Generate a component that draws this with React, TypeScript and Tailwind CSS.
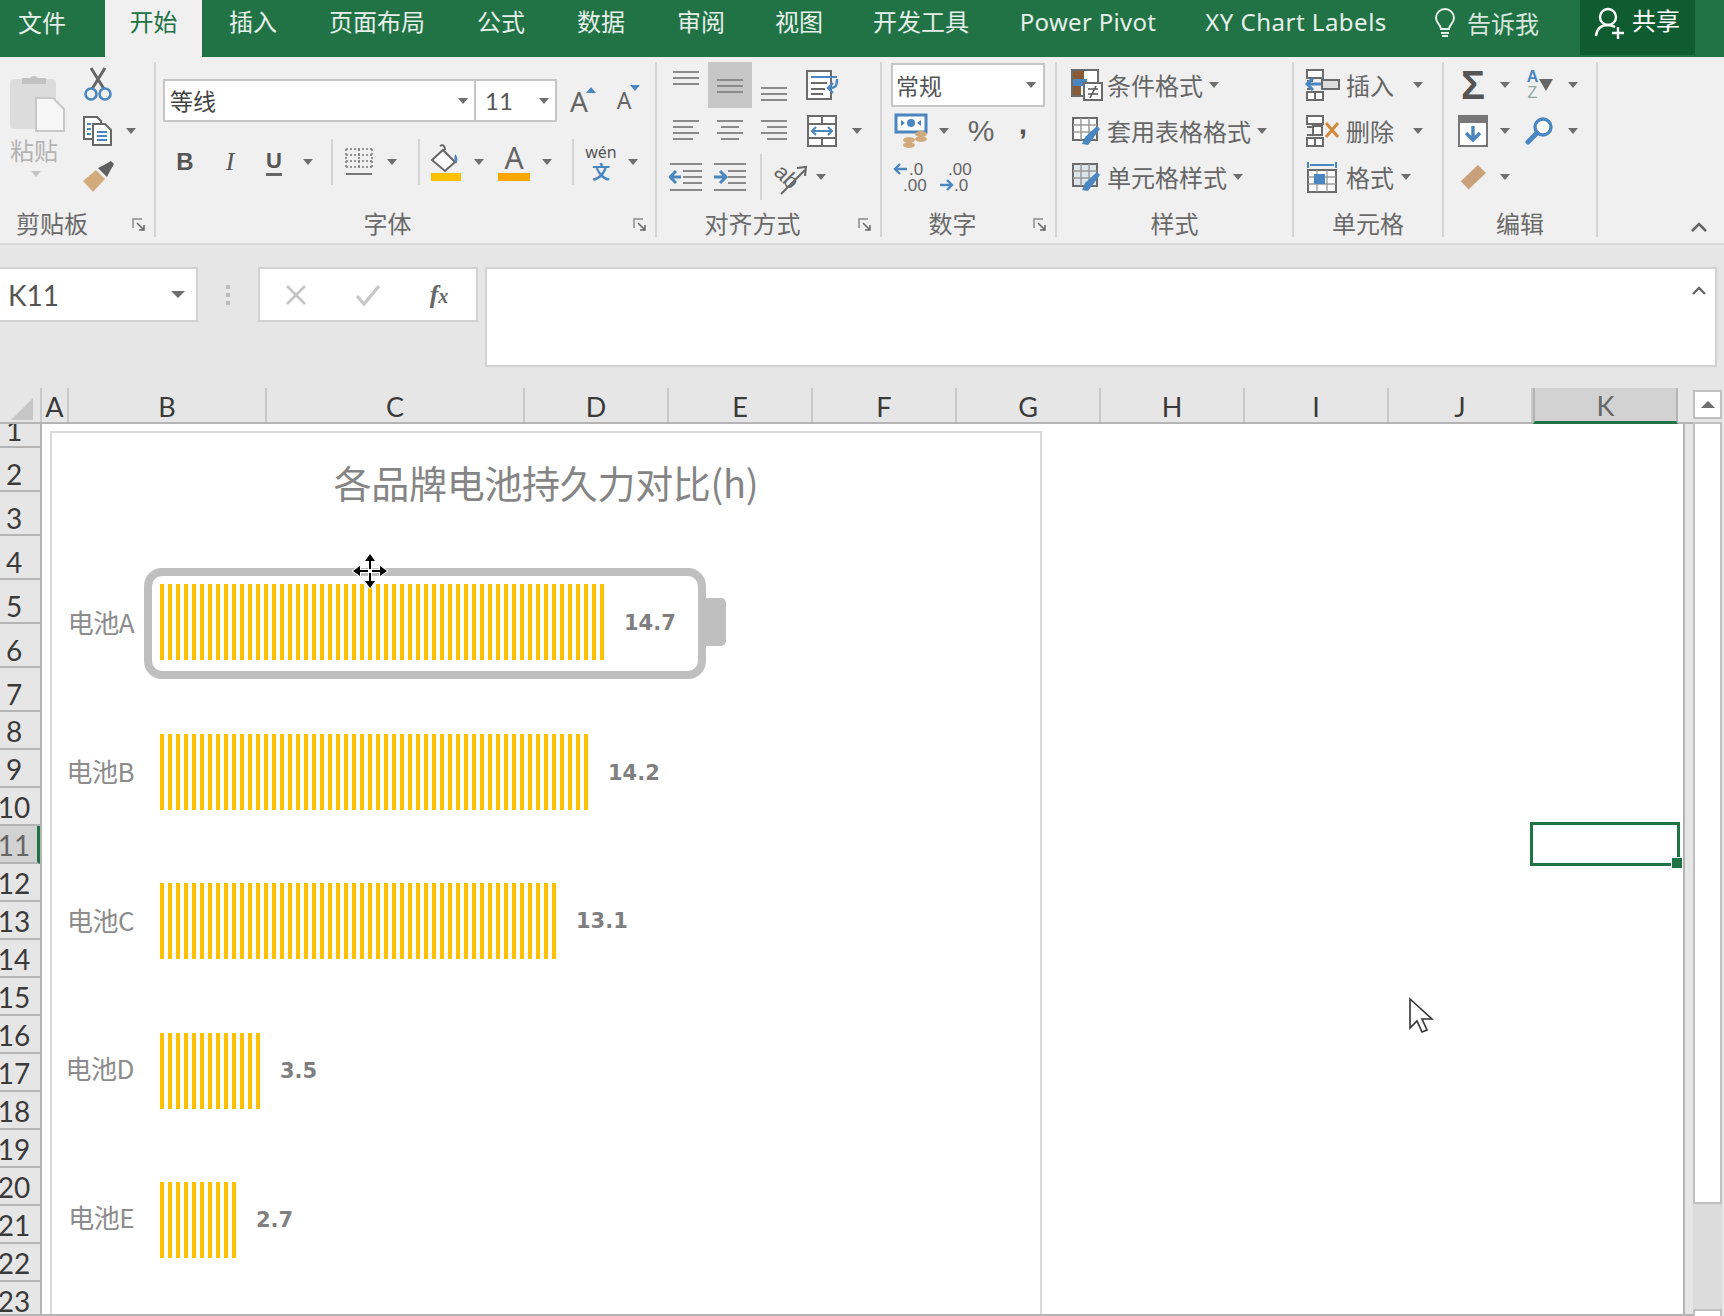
import type { ReactNode } from "react";

const blue = "#4a86bf";
const gray = "#6b6b6b";
const tan = "#d2ab7c";

const tabs = [
  { label: "插入", w: "w-[102px]" },
  { label: "页面布局", w: "w-[146px]" },
  { label: "公式", w: "w-[102px]" },
  { label: "数据", w: "w-[98px]" },
  { label: "审阅", w: "w-[102px]" },
  { label: "视图", w: "w-[94px]" },
  { label: "开发工具", w: "w-[150px]" },
  { label: "Power Pivot", w: "w-[184px] tracking-[0.3px]" },
  { label: "XY Chart Labels", w: "w-[232px] tracking-[0.5px]" },
];

const columns = [
  { label: "A", w: "w-[27px]" },
  { label: "B", w: "w-[198px]" },
  { label: "C", w: "w-[258px]" },
  { label: "D", w: "w-[144px]" },
  { label: "E", w: "w-[144px]" },
  { label: "F", w: "w-[144px]" },
  { label: "G", w: "w-[144px]" },
  { label: "H", w: "w-[144px]" },
  { label: "I", w: "w-[144px]" },
  { label: "J", w: "w-[144px]" },
];

const rowNumbers = Array.from({ length: 23 }, (_, i) => i + 1);

const batteries = [
  { name: "电池A", value: "14.7", w: "w-[444px]", lift: "-mt-[1px]", drop: "mt-[4px]" },
  { name: "电池B", value: "14.2", w: "w-[428px]", lift: "-mt-[3px]", drop: "mt-[4px]" },
  { name: "电池C", value: "13.1", w: "w-[396px]", lift: "-mt-[3px]", drop: "mt-[2px]" },
  { name: "电池D", value: "3.5", w: "w-[100px]", lift: "-mt-[7px]", drop: "mt-[2px]" },
  { name: "电池E", value: "2.7", w: "w-[76px]", lift: "-mt-[7px]", drop: "mt-[1px]" },
];

function Caret({ faded }: { faded?: boolean }) {
  return (
    <span
      className={
        "inline-block h-0 w-0 border-x-[5px] border-t-[6px] border-x-transparent " +
        (faded ? "border-t-[#c4c4c4]" : "border-t-[#6e6e6e]")
      }
    />
  );
}

function S({ c, children }: { c: string; children?: ReactNode }) {
  return <div className={"flex h-full items-center justify-center " + c}>{children}</div>;
}

function Sep() {
  return <span className="block h-[46px] w-[2px] bg-[#d4d4d4]" />;
}

function Launcher() {
  return (
    <svg width="14" height="14" viewBox="0 0 14 14" className="absolute right-[8px] top-[8px]">
      <path d="M1 10V1h9" fill="none" stroke="#8a8a8a" strokeWidth="1.5" />
      <path d="M5 5l7 7M12 7v5H7" fill="none" stroke="#666" strokeWidth="1.5" />
    </svg>
  );
}

function Group({
  label,
  launcher,
  c,
  labelPad,
  children,
}: {
  label: string;
  launcher?: boolean;
  c: string;
  labelPad?: string;
  children: ReactNode;
}) {
  return (
    <div className={"mt-[5px] flex h-[175px] shrink-0 flex-col border-r-2 border-[#d4d4d4] " + c}>
      <div className="h-[148px]">{children}</div>
      <div className={"relative h-[26px] text-center text-[24px] leading-[26px] text-[#6a6a6a] " + (labelPad ?? "")}>
        {label}
        {launcher && <Launcher />}
      </div>
    </div>
  );
}

function Lines({ kind }: { kind: "top" | "mid" | "bottom" | "left" | "center" | "right" }) {
  if (kind === "top" || kind === "mid" || kind === "bottom") {
    const y = kind === "top" ? 4 : kind === "mid" ? 12 : 20;
    return (
      <svg width="30" height="34" viewBox="0 0 30 34">
        <path d={`M2 ${y}h26M2 ${y + 6}h26M2 ${y + 12}h26`} stroke="#8a8a8a" strokeWidth="2" />
      </svg>
    );
  }
  const short = kind === "left" ? "M2 13h20M2 25h20" : kind === "center" ? "M6 13h18M6 25h18" : "M8 13h20M8 25h20";
  return (
    <svg width="30" height="34" viewBox="0 0 30 34">
      <path d="M2 7h26M2 19h26" stroke="#8a8a8a" strokeWidth="2" />
      <path d={short} stroke="#8a8a8a" strokeWidth="2" />
    </svg>
  );
}

function Grid({ fill }: { fill?: string }) {
  return (
    <svg width="34" height="32" viewBox="0 0 34 32">
      <rect x="3" y="3" width="24" height="22" fill={fill ?? "#fff"} stroke={gray} strokeWidth="2" />
      <path d="M3 10h24M3 17h24M11 3v22M19 3v22" stroke="#9a9a9a" strokeWidth="1.5" />
      <path d="M30 14l-12 16 -6-1 3-7 12-11z" fill={blue} />
    </svg>
  );
}

function CellIcon({ kind }: { kind: "insert" | "delete" | "format" }) {
  if (kind === "format") {
    return (
      <svg width="34" height="36" viewBox="0 0 34 36">
        <path d="M2 3v6M30 3v6M4 6h24" stroke={blue} strokeWidth="2" />
        <rect x="2" y="11" width="28" height="22" fill="#fff" stroke={gray} strokeWidth="2" />
        <path d="M2 18h28M2 25h28M11 11v22M21 11v22" stroke="#9a9a9a" strokeWidth="1.3" />
        <rect x="8" y="15" width="11" height="10" fill={blue} />
      </svg>
    );
  }
  return (
    <svg width="36" height="34" viewBox="0 0 36 34">
      <path d="M2 2h16v8H2zM2 24h16v8H2zM10 24v8M2 13h6M2 21h6" fill="#fff" stroke={gray} strokeWidth="2" />
      {kind === "insert" ? (
        <>
          <rect x="17" y="12" width="17" height="9" fill="#ddd" stroke={gray} strokeWidth="2" />
          <path d="M16 16H3M8 10l-6 6 6 6" fill="none" stroke={blue} strokeWidth="3" />
        </>
      ) : (
        <>
          <rect x="8" y="12" width="9" height="9" fill="#fff" stroke={gray} strokeWidth="2" />
          <path d="M21 9l12 14M33 9L21 23" stroke="#d08a3c" strokeWidth="3" />
        </>
      )}
    </svg>
  );
}

function StyleRow({ icon, label }: { icon: ReactNode; label: string }) {
  return (
    <div className="flex h-[46px] items-center pl-[10px]">
      <S c="w-[40px]">{icon}</S>
      <span className="text-[24px] text-[#666]">{label}</span>
      <span className="ml-[6px] flex">
        <Caret />
      </span>
    </div>
  );
}

function Ribbon() {
  return (
    <div className="flex h-[188px] border-b-2 border-[#d9d9d9] bg-[#f0f0f0]">
      {/* 剪贴板 */}
      <Group label="剪贴板" launcher c="w-[156px]" labelPad="pr-[50px]">
        <div className="flex h-full">
          <div className="flex w-[76px] flex-col items-center pl-[2px] pt-[9px]">
            <svg width="60" height="62" viewBox="0 0 60 62">
              <rect x="1" y="8" width="46" height="50" rx="4" fill="#dcdcdc" />
              <path d="M13 13V7h8a5 5 0 0 1 8 0h8v6z" fill="#c2c2c2" />
              <path d="M27 27h17l11 11v22H27z" fill="#f6f6f6" stroke="#c8c8c8" strokeWidth="2" />
            </svg>
            <span className="mr-[10px] mt-[2px] text-[24px] leading-[30px] text-[#b4b4b4]">粘贴</span>
            <span className="mr-[6px] mt-[6px] flex">
              <Caret faded />
            </span>
          </div>
          <div>
            <div className="flex h-[46px] items-center">
              <S c="w-[44px]">
                <svg width="30" height="36" viewBox="0 0 30 36">
                  <path d="M9 22L22 1M21 22L8 1" stroke="#666" strokeWidth="3" />
                  <circle cx="8" cy="27" r="5.5" fill="none" stroke={blue} strokeWidth="2.6" />
                  <circle cx="22" cy="27" r="5.5" fill="none" stroke={blue} strokeWidth="2.6" />
                </svg>
              </S>
            </div>
            <div className="flex h-[46px] items-center">
              <S c="w-[44px]">
                <svg width="32" height="32" viewBox="0 0 32 32">
                  <path d="M2 2h13l4 4v18H2z" fill="#fff" stroke="#666" strokeWidth="2" />
                  <path d="M11 9h12l6 6v15H11z" fill="#fff" stroke="#666" strokeWidth="2" />
                  <path d="M5 9h4M5 14h4M5 19h4M15 17h10M15 21h10M15 25h10" stroke={blue} strokeWidth="2" />
                </svg>
              </S>
              <S c="w-[22px]">
                <Caret />
              </S>
            </div>
            <div className="flex h-[46px] items-center">
              <S c="w-[44px]">
                <svg width="34" height="32" viewBox="0 0 34 32">
                  <path d="M2 20L15 9l9 9-12 13z" fill={tan} />
                  <path d="M17 7l6-3 7-4 3 3-4 7-3 6z" fill="#5f5f5f" />
                </svg>
              </S>
            </div>
          </div>
        </div>
      </Group>

      {/* 字体 */}
      <Group label="字体" launcher c="w-[501px]" labelPad="pr-[36px]">
        <div className="pl-[7px] pt-[17px]">
          <div className="flex h-[43px] items-center">
            <div className="flex h-full w-[313px] items-center justify-between border-2 border-[#c6c6c6] bg-white pl-[5px] pr-[6px] text-[23px] text-[#444]">
              等线
              <Caret />
            </div>
            <div className="flex h-full w-[81px] items-center justify-between border-2 border-l-0 border-[#c6c6c6] bg-white pl-[9px] pr-[6px] font-['Lato'] text-[24px] text-[#555]">
              11
              <Caret />
            </div>
            <S c="w-[44px]">
              <span className="relative font-['Noto_Sans'] text-[28px] leading-none text-[#666]">
                A
                <span className="absolute -right-[8px] top-[0px] h-0 w-0 border-x-[5px] border-b-[6px] border-x-transparent border-b-[#4a86bf]" />
              </span>
            </S>
            <S c="w-[46px]">
              <span className="relative font-['Noto_Sans'] text-[23px] leading-none text-[#666]">
                A
                <span className="absolute -right-[9px] -top-[4px] h-0 w-0 border-x-[5px] border-t-[6px] border-x-transparent border-t-[#4a86bf]" />
              </span>
            </S>
          </div>
          <div className="mt-[17px] flex h-[46px] items-center text-[#555]">
            <S c="w-[44px]">
              <span className="font-['Liberation_Sans'] text-[24px] font-bold leading-none">B</span>
            </S>
            <S c="w-[46px]">
              <span className="font-['Liberation_Serif'] text-[26px] italic leading-none">I</span>
            </S>
            <S c="w-[42px]">
              <span className="border-b-[3px] border-[#666] font-['Liberation_Sans'] text-[22px] font-bold leading-[24px]">U</span>
            </S>
            <S c="w-[26px]">
              <Caret />
            </S>
            <S c="w-[22px]">
              <Sep />
            </S>
            <S c="w-[32px]">
              <svg width="30" height="30" viewBox="0 0 30 30">
                <path d="M2 2h26M2 8h26M2 14h26M2 20h26M2 2v20M15 2v20M28 2v20" stroke="#777" strokeWidth="1.5" strokeDasharray="2 2" fill="none" />
                <path d="M2 27h26" stroke="#777" strokeWidth="2" />
              </svg>
            </S>
            <S c="w-[34px]">
              <Caret />
            </S>
            <S c="w-[20px]">
              <Sep />
            </S>
            <S c="w-[34px]">
              <svg width="34" height="38" viewBox="0 0 34 38">
                <path d="M11 3c3-2 5 0 5 4M3 17l11-10 12 12-10 9z" fill="#fff" stroke="#666" strokeWidth="2" />
                <path d="M26 11c3 3 3 7 1 10-2-3-2-7-1-10z" fill={blue} />
                <rect x="2" y="30" width="30" height="8" fill="#ffc000" />
              </svg>
            </S>
            <S c="w-[32px]">
              <Caret />
            </S>
            <S c="w-[38px]">
              <div className="flex w-[32px] flex-col items-center">
                <span className="font-['Noto_Sans'] text-[30px] leading-[30px] text-[#666]">A</span>
                <span className="block h-[8px] w-full bg-[#ffa500]" />
              </div>
            </S>
            <S c="w-[28px]">
              <Caret />
            </S>
            <S c="w-[24px]">
              <Sep />
            </S>
            <S c="w-[32px]">
              <div className="flex flex-col items-center">
                <span className="font-['Noto_Sans'] text-[16px] leading-[18px] text-[#555]">wén</span>
                <span className="text-[18px] font-bold leading-[20px] text-[#4a86bf]">文</span>
              </div>
            </S>
            <S c="w-[32px]">
              <Caret />
            </S>
          </div>
        </div>
      </Group>

      {/* 对齐方式 */}
      <Group label="对齐方式" launcher c="w-[225px]" labelPad="pr-[32px]">
        <div className="pl-[7px]">
          <div className="flex h-[46px] items-center">
            <S c="w-[44px]">
              <Lines kind="top" />
            </S>
            <S c="h-[44px] w-[44px] bg-[#c6c6c6]">
              <Lines kind="mid" />
            </S>
            <S c="w-[44px]">
              <Lines kind="bottom" />
            </S>
            <S c="w-[52px]">
              <svg width="34" height="32" viewBox="0 0 34 32">
                <rect x="2" y="2" width="24" height="28" fill="#fff" stroke={gray} strokeWidth="2" />
                <path d="M6 8h26" stroke={blue} strokeWidth="2" />
                <path d="M6 14h16M6 20h14M6 25h12" stroke={gray} strokeWidth="2" />
                <path d="M32 10c0 8-2 9-8 9M28 14l-5 5 5 5" fill="none" stroke={blue} strokeWidth="2.4" />
              </svg>
            </S>
          </div>
          <div className="flex h-[46px] items-center">
            <S c="w-[44px]">
              <Lines kind="left" />
            </S>
            <S c="w-[44px]">
              <Lines kind="center" />
            </S>
            <S c="w-[44px]">
              <Lines kind="right" />
            </S>
            <S c="w-[52px]">
              <svg width="32" height="34" viewBox="0 0 32 34">
                <rect x="2" y="2" width="28" height="30" fill="#fff" stroke={gray} strokeWidth="2" />
                <path d="M2 10h28M2 24h28M16 2v8M16 24v8" stroke={gray} strokeWidth="2" />
                <path d="M6 17h20M10 13l-4 4 4 4M22 13l4 4-4 4" fill="none" stroke={blue} strokeWidth="2" />
              </svg>
            </S>
            <S c="w-[18px]">
              <Caret />
            </S>
          </div>
          <div className="flex h-[46px] items-center">
            <S c="w-[44px]">
              <svg width="34" height="32" viewBox="0 0 34 32">
                <path d="M1 3h32M14 10h19M14 16h19M14 22h19M1 29h32" stroke="#8a8a8a" strokeWidth="2" />
                <path d="M12 16H2M7 10l-6 6 6 6" fill="none" stroke={blue} strokeWidth="3" />
              </svg>
            </S>
            <S c="w-[44px]">
              <svg width="34" height="32" viewBox="0 0 34 32">
                <path d="M1 3h32M15 10h18M15 16h18M15 22h18M1 29h32" stroke="#8a8a8a" strokeWidth="2" />
                <path d="M1 16h11M7 10l6 6-6 6" fill="none" stroke={blue} strokeWidth="3" />
              </svg>
            </S>
            <S c="w-[18px]">
              <Sep />
            </S>
            <S c="w-[44px]">
              <svg width="38" height="38" viewBox="0 0 38 38">
                <text x="2" y="26" transform="rotate(45 14 18)" fontFamily="Liberation Sans" fontSize="22" fill="#666">
                  ab
                </text>
                <path d="M8 36L32 12M24 10l9-1-1 9" fill="none" stroke="#666" strokeWidth="2" />
              </svg>
            </S>
            <S c="w-[14px]">
              <Caret />
            </S>
          </div>
        </div>
      </Group>

      {/* 数字 */}
      <Group label="数字" launcher c="w-[175px]" labelPad="pr-[32px]">
        <div className="pl-[9px]">
          <div className="flex h-[46px] items-center">
            <div className="flex h-[44px] w-[154px] items-center justify-between border-2 border-[#c6c6c6] bg-white pl-[3px] pr-[7px] text-[23px] text-[#555]">
              常规
              <Caret />
            </div>
          </div>
          <div className="flex h-[46px] items-center">
            <S c="w-[42px]">
              <svg width="36" height="36" viewBox="0 0 36 36">
                <rect x="2" y="2" width="30" height="17" fill="#fff" stroke={blue} strokeWidth="3" />
                <path d="M7 7l4 3-4 3zM27 7l-4 3 4 3z" fill={blue} />
                <circle cx="17" cy="10" r="4" fill={blue} />
                <ellipse cx="27" cy="21" rx="6" ry="3" fill={tan} />
                <ellipse cx="27" cy="26" rx="6" ry="3" fill={tan} />
                <ellipse cx="15" cy="27" rx="6" ry="3" fill={tan} />
                <ellipse cx="15" cy="32" rx="6" ry="3" fill={tan} />
              </svg>
            </S>
            <S c="w-[22px]">
              <Caret />
            </S>
            <S c="w-[52px]">
              <span className="font-['Liberation_Sans'] text-[30px] leading-none text-[#666]">%</span>
            </S>
            <S c="w-[32px]">
              <span className="mb-[14px] font-['Liberation_Sans'] text-[30px] font-bold leading-none text-[#555]">,</span>
            </S>
          </div>
          <div className="flex h-[46px] items-center">
            <S c="w-[40px]">
              <svg width="36" height="34" viewBox="0 0 36 34">
                <path d="M2 9h12M7 4L2 9l5 5" fill="none" stroke={blue} strokeWidth="2.4" />
                <text x="16" y="15" fontFamily="Liberation Sans" fontSize="17" fill="#666">.0</text>
                <text x="10" y="31" fontFamily="Liberation Sans" fontSize="17" fill="#666">.00</text>
              </svg>
            </S>
            <S c="w-[50px]">
              <svg width="36" height="34" viewBox="0 0 36 34">
                <text x="10" y="15" fontFamily="Liberation Sans" fontSize="17" fill="#666">.00</text>
                <path d="M2 25h12M9 20l5 5-5 5" fill="none" stroke={blue} strokeWidth="2.4" />
                <text x="16" y="31" fontFamily="Liberation Sans" fontSize="17" fill="#666">.0</text>
              </svg>
            </S>
          </div>
        </div>
      </Group>

      {/* 样式 */}
      <Group label="样式" c="w-[237px]">
        <StyleRow
          label="条件格式"
          icon={
            <svg width="34" height="34" viewBox="0 0 34 34">
              <rect x="2" y="2" width="26" height="26" fill="#fff" stroke={gray} strokeWidth="2" />
              <rect x="3" y="3" width="11" height="8" fill="#8a5a34" />
              <rect x="3" y="11" width="14" height="7" fill={blue} />
              <rect x="3" y="18" width="8" height="9" fill="#8a5a34" />
              <rect x="14" y="15" width="18" height="17" fill="#fff" stroke={gray} strokeWidth="2" />
              <path d="M18 21h10M18 26h10M26 18l-6 12" stroke="#555" strokeWidth="1.5" />
            </svg>
          }
        />
        <StyleRow label="套用表格格式" icon={<Grid />} />
        <StyleRow label="单元格样式" icon={<Grid fill="#dbe5ea" />} />
      </Group>

      {/* 单元格 */}
      <Group label="单元格" c="w-[150px]">
        <div className="flex h-[46px] items-center pl-[11px]">
          <S c="w-[36px]">
            <CellIcon kind="insert" />
          </S>
          <span className="ml-[5px] text-[24px] text-[#666]">插入</span>
          <span className="ml-[19px] flex">
            <Caret />
          </span>
        </div>
        <div className="flex h-[46px] items-center pl-[11px]">
          <S c="w-[36px]">
            <CellIcon kind="delete" />
          </S>
          <span className="ml-[5px] text-[24px] text-[#666]">删除</span>
          <span className="ml-[19px] flex">
            <Caret />
          </span>
        </div>
        <div className="flex h-[46px] items-center pl-[11px]">
          <S c="w-[36px]">
            <CellIcon kind="format" />
          </S>
          <span className="ml-[5px] text-[24px] text-[#666]">格式</span>
          <span className="ml-[7px] flex">
            <Caret />
          </span>
        </div>
      </Group>

      {/* 编辑 */}
      <Group label="编辑" c="w-[154px]">
        <div className="flex h-[46px] items-center pl-[11px]">
          <S c="w-[36px]">
            <span className="font-['Liberation_Sans'] text-[40px] font-bold leading-none text-[#555]">Σ</span>
          </S>
          <S c="w-[28px]">
            <Caret />
          </S>
          <S c="w-[42px]">
            <div className="flex items-center">
              <div className="flex flex-col items-center font-['Liberation_Sans'] text-[16px] font-bold leading-[16px]">
                <span className="text-[#4a86bf]">A</span>
                <span className="font-normal text-[#8fa8a0]">Z</span>
              </div>
              <span className="ml-[1px] h-0 w-0 border-x-[7px] border-t-[12px] border-x-transparent border-t-[#666]" />
            </div>
          </S>
          <S c="w-[24px]">
            <Caret />
          </S>
        </div>
        <div className="flex h-[46px] items-center pl-[11px]">
          <S c="w-[36px]">
            <svg width="30" height="32" viewBox="0 0 30 32">
              <rect x="1" y="1" width="28" height="30" fill="#fff" stroke="#777" strokeWidth="2" />
              <rect x="1" y="1" width="28" height="7" fill="#777" />
              <path d="M15 11v14M8 18l7 7 7-7" fill="none" stroke={blue} strokeWidth="3.4" />
            </svg>
          </S>
          <S c="w-[28px]">
            <Caret />
          </S>
          <S c="w-[42px]">
            <svg width="30" height="30" viewBox="0 0 30 30">
              <circle cx="18" cy="11" r="8" fill="#fff" stroke={blue} strokeWidth="3.4" />
              <path d="M12 17L3 26" stroke={blue} strokeWidth="5" strokeLinecap="round" />
            </svg>
          </S>
          <S c="w-[24px]">
            <Caret />
          </S>
        </div>
        <div className="flex h-[46px] items-center pl-[11px]">
          <S c="w-[36px]">
            <svg width="28" height="28" viewBox="0 0 28 28">
              <path d="M1 19L19 2l8 8L9 27z" fill="#c8a07a" />
              <path d="M1 19l8 8" stroke="#f0f0f0" strokeWidth="2" />
            </svg>
          </S>
          <S c="w-[28px]">
            <Caret />
          </S>
        </div>
      </Group>

      <div className="flex flex-1 items-end justify-end pb-[10px] pr-[16px]">
        <svg width="18" height="12" viewBox="0 0 18 12">
          <path d="M2 10l7-7 7 7" fill="none" stroke="#666" strokeWidth="2.6" />
        </svg>
      </div>
    </div>
  );
}

function FormulaBar() {
  return (
    <div className="flex h-[143px] pt-[22px]">
      <div className="flex h-[55px] w-[198px] items-center justify-between border-2 border-l-0 border-[#d2d2d2] bg-white pl-[8px] pr-[11px] font-['Lato'] text-[28px] text-[#555]">
        K11
        <span className="h-0 w-0 border-x-[7px] border-t-[7px] border-x-transparent border-t-[#6e6e6e]" />
      </div>
      <div className="flex h-[55px] w-[60px] flex-col items-center justify-center gap-[4px]">
        <span className="h-[4px] w-[4px] bg-[#bcbcbc]" />
        <span className="h-[4px] w-[4px] bg-[#bcbcbc]" />
        <span className="h-[4px] w-[4px] bg-[#bcbcbc]" />
      </div>
      <div className="flex h-[55px] w-[220px] items-center border-2 border-[#d2d2d2] bg-white">
        <S c="w-[72px]">
          <svg width="22" height="22" viewBox="0 0 22 22">
            <path d="M2 2l18 18M20 2L2 20" stroke="#c4c4c4" strokeWidth="2.6" />
          </svg>
        </S>
        <S c="w-[72px]">
          <svg width="26" height="22" viewBox="0 0 26 22">
            <path d="M2 12l7 8L24 2" fill="none" stroke="#c8c8c8" strokeWidth="3.4" />
          </svg>
        </S>
        <S c="w-[70px]">
          <span className="font-['Liberation_Serif'] text-[26px] font-bold italic leading-none text-[#666]">
            f<span className="text-[20px]">x</span>
          </span>
        </S>
      </div>
      <div className="ml-[7px] flex h-[100px] w-[1232px] justify-end border-2 border-[#d2d2d2] bg-white pr-[8px] pt-[16px]">
        <svg width="16" height="12" viewBox="0 0 16 12">
          <path d="M2 9l6-6 6 6" fill="none" stroke="#666" strokeWidth="2.4" />
        </svg>
      </div>
    </div>
  );
}

function Chart() {
  return (
    <div className="ml-[8px] mt-[7px] h-[900px] w-[992px] border-2 border-[#d9d9d9] bg-white">
      <div className="flex h-[96px] items-center justify-center text-[38px] tracking-[-0.3px] text-[#858585]">
        各品牌电池持久力对比(h)
      </div>
      <div className="flex flex-col gap-[73.5px] pt-[55px]">
        {batteries.map((b, i) => (
          <div key={b.name} className="relative flex h-[76px] items-center">
            <div className={"w-[82px] text-right text-[26px] tracking-[-0.5px] text-[#8c8c8c] " + b.lift}>{b.name}</div>
            <div
              className={
                "ml-[26px] h-full bg-[repeating-linear-gradient(90deg,#ffc000_0,#ffc000_4px,#fff_4px,#fff_8px)] " + b.w
              }
            />
            <div className={"ml-[20px] font-['DejaVu_Sans'] text-[21px] font-bold text-[#7f7f7f] " + b.drop}>{b.value}</div>
            {i === 0 && (
              <div className="absolute left-[92px] top-[-16px] h-[111px] w-[562px] rounded-[18px] border-[8px] border-[#bfbfbf]">
                <div className="absolute -right-[28px] top-[22px] h-[48px] w-[20px] rounded-r-[5px] bg-[#bfbfbf]" />
              </div>
            )}
          </div>
        ))}
      </div>
    </div>
  );
}

function Sheet() {
  return (
    <div className="flex w-[1693px] shrink-0 flex-col border-b-2 border-[#b4b4b4]">
      <div className="flex h-[36px] shrink-0 border-b-2 border-[#b4b4b4] font-['Lato'] text-[27px] leading-none text-[#3a3a3a]">
        <div className="flex w-[42px] items-end justify-end border-r-2 border-[#c8c8c8] pb-[2px] pr-[7px]">
          <span className="h-0 w-0 border-b-[22px] border-l-[22px] border-b-[#c6c6c6] border-l-transparent" />
        </div>
        {columns.map((c) => (
          <div key={c.label} className={"flex items-center justify-center border-r-2 border-[#c8c8c8] pt-[2px] " + c.w}>
            {c.label}
          </div>
        ))}
        <div className="-mb-[2px] flex w-[145px] items-center justify-center border-x-2 border-b-[3px] border-x-[#b4b4b4] border-b-[#217346] bg-[#d2d2d2] pt-[2px] text-[#666]">
          K
        </div>
      </div>
      <div className="flex min-h-0 flex-1">
        <div className="w-[42px] shrink-0 overflow-hidden border-r-2 border-[#b4b4b4] font-['Lato'] text-[28px] leading-none text-[#3a3a3a]">
          {rowNumbers.map((n) => (
            <div
              key={n}
              className={
                "flex items-center overflow-hidden border-b-2 border-[#b4b4b4] " +
                (n === 1 ? "h-[24px]" : n < 8 ? "h-[44px]" : "h-[38px]") +
                (n === 11 ? " border-r-[3px] border-r-[#217346] bg-[#d2d2d2] text-[#666]" : "")
              }
            >
              <span
                className={
                  "flex w-[28px] justify-center " +
                  (n === 1 ? "-mt-[10px]" : n < 8 ? "mt-[9px]" : "mt-[2px]")
                }
              >
                {n}
              </span>
            </div>
          ))}
        </div>
        <div className="relative w-[1643px] overflow-hidden border-r-2 border-[#b4b4b4] bg-white">
          <Chart />
          {/* selected cell */}
          <div className="absolute left-[1488px] top-[398px] h-[44px] w-[150px] border-[3px] border-[#217346]">
            <div className="absolute -bottom-[6px] -right-[6px] h-[12px] w-[12px] border border-white bg-[#217346]" />
          </div>
          {/* pointers */}
          <svg width="36" height="36" viewBox="0 0 36 36" className="absolute left-[310px] top-[129px]">
            <g fill="#000" stroke="#fff" strokeWidth="2" paintOrder="stroke">
              <path d="M18 6v24M6 18h24" stroke="#fff" strokeWidth="4" />
              <path d="M18 1l5 7h-10zM18 35l5-7h-10zM1 18l7-5v10zM35 18l-7-5v10z" />
            </g>
            <path d="M18 6v24M6 18h24" stroke="#000" strokeWidth="2" />
            <rect x="16" y="16" width="4" height="4" fill="#fff" />
          </svg>
          <svg width="28" height="38" viewBox="0 0 28 38" className="absolute left-[1366px] top-[573px]">
            <path d="M2 2v29l7-7 5 11 5-2-5-11h10z" fill="#fff" stroke="#333" strokeWidth="1.6" />
          </svg>
        </div>
      </div>
    </div>
  );
}

export default function App() {
  return (
    <div className="flex h-[1316px] w-[1724px] flex-col overflow-hidden bg-[#e6e6e6] font-['Noto_Sans_CJK_SC','Noto_Sans',sans-serif]">
      {/* tabs */}
      <div className="flex h-[57px] shrink-0 bg-[#217346] text-[24px] text-[#e6efe9]">
        <div className="flex h-[43px] w-[84px] items-center justify-center">文件</div>
        <div className="ml-[21px] flex h-full w-[97px] items-start justify-center bg-[#f0f0f0] pt-[3px] text-[#217346]">
          开始
        </div>
        {tabs.map((t) => (
          <div key={t.label} className={"flex h-[43px] items-center justify-center font-['Noto_Sans','Noto_Sans_CJK_SC',sans-serif] " + t.w}>
            {t.label}
          </div>
        ))}
        <div className="flex h-[46px] w-[168px] items-center pl-[22px] text-[#d8e6dd]">
          <svg width="22" height="30" viewBox="0 0 22 30">
            <path d="M7 21c0-4-5-6-5-11a9 9 0 0 1 18 0c0 5-5 7-5 11zM7 25h8M8 28h6" fill="none" stroke="#e6efe9" strokeWidth="2" />
          </svg>
          <span className="ml-[11px]">告诉我</span>
        </div>
        <div className="flex h-[55px] w-[115px] items-center bg-[#0f5c30] pl-[14px] text-white">
          <svg width="32" height="34" viewBox="0 0 32 34" className="-mt-[10px]">
            <circle cx="14" cy="11" r="8" fill="none" stroke="#fff" strokeWidth="2.4" />
            <path d="M2 30c1-8 6-11 12-11 3 0 5 1 7 2M24 21v12M18 27h12" fill="none" stroke="#fff" strokeWidth="2.4" />
          </svg>
          <span className="ml-[6px] -mt-[16px]">共享</span>
        </div>
      </div>

      <Ribbon />
      <FormulaBar />

      <div className="flex min-h-0 flex-1">
        <Sheet />
        <div className="flex w-[31px] flex-col items-start pt-[2px]">
          <div className="flex h-[29px] w-[29px] shrink-0 items-center justify-center border-2 border-[#c0c0c0] bg-white">
            <span className="h-0 w-0 border-x-[7px] border-b-[7px] border-x-transparent border-b-[#6e6e6e]" />
          </div>
          <div className="mt-[3px] h-[782px] w-[29px] shrink-0 border-2 border-[#c0c0c0] bg-white" />
          <div className="h-[105px] w-[29px] shrink-0 bg-[#dcdcdc]" />
          <div className="h-[10px] w-[29px] shrink-0 border-2 border-[#c0c0c0] bg-white" />
        </div>
      </div>
    </div>
  );
}
